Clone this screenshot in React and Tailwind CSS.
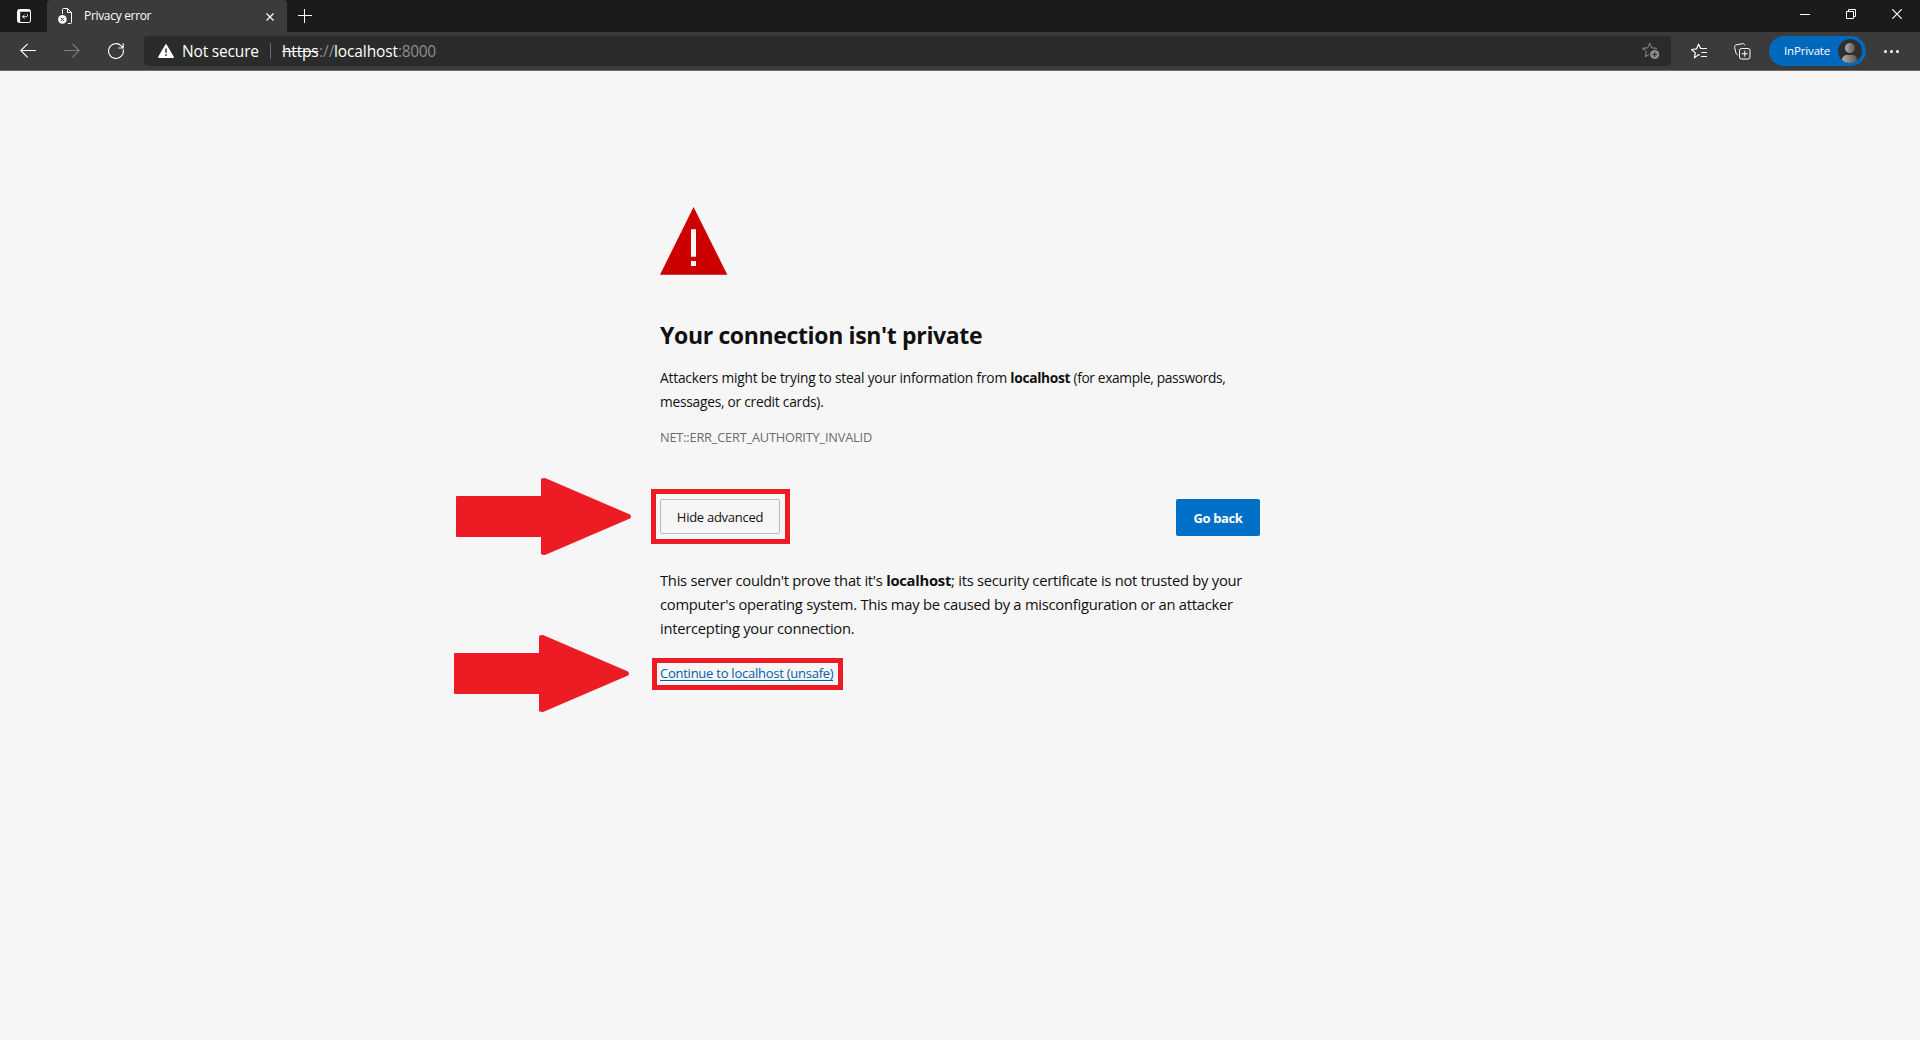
import React from "react";

const STAR = "M7.7 1.2 L9.7 5.9 L14.9 6.3 L11 9.7 L12.2 14.8 L7.7 12 L3.2 14.8 L4.4 9.7 L0.5 6.3 L5.7 5.9 Z";

function Icon({ w = 16, h = 16, className = "", children }) {
  return (
    <svg width={w} height={h} viewBox={`0 0 ${w} ${h}`} fill="none" stroke="currentColor" className={`shrink-0 ${className}`}>
      {children}
    </svg>
  );
}

function TabStrip() {
  return (
    <div className="flex h-8 items-start bg-[#1b1b1b] text-white">
      <div className="flex w-[47px] justify-end pt-[9px] pr-4">
        <Icon w={14} h={14}>
          <rect x="0.5" y="0.5" width="13" height="13" rx="1.8" />
          <path d="M1 1h12v1.8H1z M1 1h2.2v12H1z" fill="currentColor" stroke="none" />
          <path d="M10.5 5.3v1.2a1.2 1.2 0 0 1-1.2 1.2H5.6 M7.5 5.8 5.6 7.7l1.9 1.9" strokeWidth="0.9" />
        </Icon>
      </div>
      <div className="flex h-8 w-60 items-start rounded-t-[4px] bg-[#3b3b3b] pl-[11px]">
        <Icon w={15} h={17} className="mt-2">
          <path d="M4.5 6V1.5a1 1 0 0 1 1-1H9.5L13.5 4.5V14.5a1 1 0 0 1-1 1H9.8 M9.5 0.5V4.5H13.5" />
          <circle cx="4.4" cy="11.4" r="4.3" fill="currentColor" stroke="none" />
          <path d="M2.9 9.9 5.9 12.9 M5.9 9.9 2.9 12.9" stroke="#3b3b3b" />
        </Icon>
        <span className="ml-[11px] w-[182px] text-[12px] leading-8 tracking-[-0.32px] whitespace-nowrap">Privacy error</span>
        <Icon w={8} h={8} className="mt-[13px]">
          <path d="M0.5 0.5 7.5 7.5 M7.5 0.5 0.5 7.5" strokeWidth="1.2" />
        </Icon>
      </div>
      <Icon w={14} h={14} className="mt-[9px] ml-[11px]">
        <path d="M6.5 0v14 M0 6.5h14" />
      </Icon>
      <div className="ml-auto flex h-8 items-start gap-9 pt-[9px] pr-[18px]">
        <Icon w={10} h={10}><path d="M0 5.5h10" /></Icon>
        <Icon w={10} h={10}>
          <path d="M0.5 2.5h7v7h-7z M2.5 2.5v-2h7v7h-2" />
        </Icon>
        <Icon w={10} h={10}><path d="M0.3 0.3 9.7 9.7 M9.7 0.3 0.3 9.7" strokeWidth="1.2" /></Icon>
      </div>
    </div>
  );
}

function Toolbar() {
  return (
    <div className="flex h-[39px] items-start border-b border-[#6c6c6c] bg-[#3b3b3b] pt-1 text-white">
      <div className="flex h-[30px] w-36 items-center gap-7 pl-5">
        <Icon><path d="M0.8 7.5H16 M7.6 0.8 0.8 7.5 7.6 14.3" strokeWidth="1.1" /></Icon>
        <Icon className="text-[#7c7c7c]"><path d="M0 7.5H15.2 M8.4 0.8 15.2 7.5 8.4 14.3" strokeWidth="1.1" /></Icon>
        <Icon><path d="M15.2 6.4A7.4 7.4 0 1 1 13.2 2.8L15 4.6 M15.2 0.2V5H10.4" strokeWidth="1.1" /></Icon>
      </div>
      <div className="flex h-[30px] w-[1527px] items-center rounded-[4px] bg-[#2b2b2b] pl-[14px] pr-[11px]">
        <Icon w={16} h={14}>
          <path d="M8 0.8 15.2 13.2H0.8Z" fill="currentColor" strokeLinejoin="round" strokeWidth="1.4" />
          <path d="M8 4.6V8.8 M8 10.2V11.9" stroke="#2b2b2b" strokeWidth="1.5" />
        </Icon>
        <span className="ml-2 w-[78px] pt-0.5 text-[15.5px] tracking-[-0.17px] whitespace-nowrap">Not secure</span>
        <span className="ml-[10px] h-4 w-px bg-[#6b6b6b]" />
        <span className="ml-[11px] flex pt-0.5 text-[15.5px] whitespace-nowrap text-[#8e8e8e]">
          <span className="w-[37px] tracking-[-0.2px] text-white line-through decoration-1">https</span>
          <span className="w-[15px]">://</span>
          <span className="w-16 tracking-[-0.1px] text-white">localhost</span>
          <span className="tracking-[-0.35px]">:8000</span>
        </span>
        <Icon w={18} h={18} className="ml-auto text-[#8e8e8e]">
          <path d={STAR} />
          <circle cx="12.7" cy="12.5" r="5.6" fill="#2b2b2b" stroke="none" />
          <circle cx="12.7" cy="12.5" r="4.6" fill="currentColor" stroke="none" />
          <path d="M12.7 10v5 M10.2 12.5h5" stroke="#2b2b2b" strokeWidth="1.1" />
        </Icon>
      </div>
      <div className="flex h-[30px] items-center pl-5">
        <Icon w={17} h={17}>
          <path d="M8.7 12.2 7.5 11.6 3.4 14.9 4.3 9.9 0.6 6.5 5.5 5.9 7.6 1.2 9.7 5.5H10.6" strokeWidth="1.2" strokeLinejoin="round" />
          <path d="M9.8 5.5H16 M10.4 9.5H16 M10 13.5H16" strokeWidth="1.1" />
        </Icon>
        <Icon w={17} h={17} className="ml-[26px]">
          <path d="M3.8 12 C2.6 11.5 2.2 10.8 1.9 9.8 L0.7 4.6 C0.4 3.2 1 2.2 2.2 1.9 L8.4 0.7 C9.6 0.5 10.5 1 10.9 2.3" />
          <rect x="5.5" y="5.5" width="10.5" height="10.5" rx="2" />
          <path d="M10.75 7.7v6 M7.7 10.75h6" />
        </Icon>
      </div>
      <div className="ml-[18px] flex h-[30px] w-[97px] items-center rounded-full bg-[#0069be] pl-[15px]">
        <span className="w-[54px] text-[11.5px] tracking-[-0.15px]">InPrivate</span>
        <svg width="24" height="24" viewBox="0 0 24 24">
          <defs>
            <linearGradient id="person" x1="0" x2="1">
              <stop offset="0" stopColor="#b5b1ae" />
              <stop offset="1" stopColor="#5a5754" />
            </linearGradient>
            <clipPath id="disc"><circle cx="12" cy="12" r="12" /></clipPath>
          </defs>
          <circle cx="12" cy="12" r="12" fill="#32302f" />
          <g clipPath="url(#disc)" fill="url(#person)">
            <circle cx="12" cy="9" r="5" />
            <path d="M4 24V21a5 5 0 0 1 5-5h6a5 5 0 0 1 4 5V24Z" />
          </g>
        </svg>
      </div>
      <div className="flex h-[30px] items-center gap-[3px] pl-[18px]">
        <span className="size-[3px] rounded-full bg-white" />
        <span className="size-[3px] rounded-full bg-white" />
        <span className="size-[3px] rounded-full bg-white" />
      </div>
    </div>
  );
}

function Arrow() {
  return (
    <svg width="175" height="77" viewBox="0 0 175 77" fill="#ed1c24" className="block">
      <path d="M1 18H85V1Q86 0 89 0L174 36.5Q176 38.5 174 40.5L89 77Q86 77 85 76V59H1Q0 59 0 58V19Q0 18 1 18Z" />
    </svg>
  );
}

export default function App() {
  return (
    <div className="flex h-[1040px] w-[1920px] flex-col overflow-hidden bg-[#f6f6f6] font-['Open_Sans',sans-serif]">
      <TabStrip />
      <Toolbar />
      <main className="relative mx-auto w-[600px] grow pt-[136px] text-[#101010]">
        <svg width="68" height="68" viewBox="0 0 68 68" className="block">
          <path d="M33.6 0 67.3 67.7H0Z" fill="#cc0000" />
          <path d="M31 22.3h5v27.4h-5z M31 54h5v5h-5z" fill="#f6f6f6" />
        </svg>
        <h1 className="mt-11 text-[23px] leading-8 font-bold tracking-[-0.35px]">Your connection isn't private</h1>
        <p className="mt-[15px] text-[13.75px] leading-6 whitespace-nowrap">
          <span className="tracking-[-0.2px]">Attackers might be trying to steal your information from </span>
          <b className="tracking-[-0.3px]">localhost</b>
          <span className="tracking-[-0.35px]"> (for example, passwords,</span>
          <br />
          <span className="tracking-[-0.25px]">messages, or credit cards).</span>
        </p>
        <p className="mt-[13px] text-[12.75px] leading-5 tracking-[-0.18px] text-[#6b6b6b]">NET::ERR_CERT_AUTHORITY_INVALID</p>
        <div className="mt-[52px] flex h-[37px] items-start justify-between">
          <button className="h-[35px] w-[120px] rounded-[2px] border border-[#bdbdbd] pt-0.5 text-[13px] tracking-[-0.27px]">Hide advanced</button>
          <button className="h-[37px] w-[84px] rounded-[2px] bg-[#0070c6] pt-0.5 text-[13px] font-bold tracking-[-0.4px] text-white">Go back</button>
        </div>
        <p className="mt-8 text-[14.75px] leading-6 tracking-[-0.26px] whitespace-nowrap">
          This server couldn't prove that it's <b>localhost</b>; its security certificate is not trusted by your
          <br />
          computer's operating system. This may be caused by a misconfiguration or an attacker
          <br />
          intercepting your connection.
        </p>
        <a className="mt-[22px] block h-[19px] w-[173px] border-b border-[#0061ab] text-[13px] leading-[22px] tracking-[-0.25px] whitespace-nowrap text-[#0061ab]">Continue to localhost (unsafe)</a>

        {/* Callouts drawn over the page */}
        <div className="absolute top-[407px] -left-[204px]"><Arrow /></div>
        <div className="absolute top-[418px] -left-[9px] h-[55px] w-[139px] border-5 border-[#ed1c24]" />
        <div className="absolute top-[564px] -left-[206px]"><Arrow /></div>
        <div className="absolute top-[587px] -left-2 h-8 w-[191px] border-5 border-[#ed1c24]" />
      </main>
    </div>
  );
}
